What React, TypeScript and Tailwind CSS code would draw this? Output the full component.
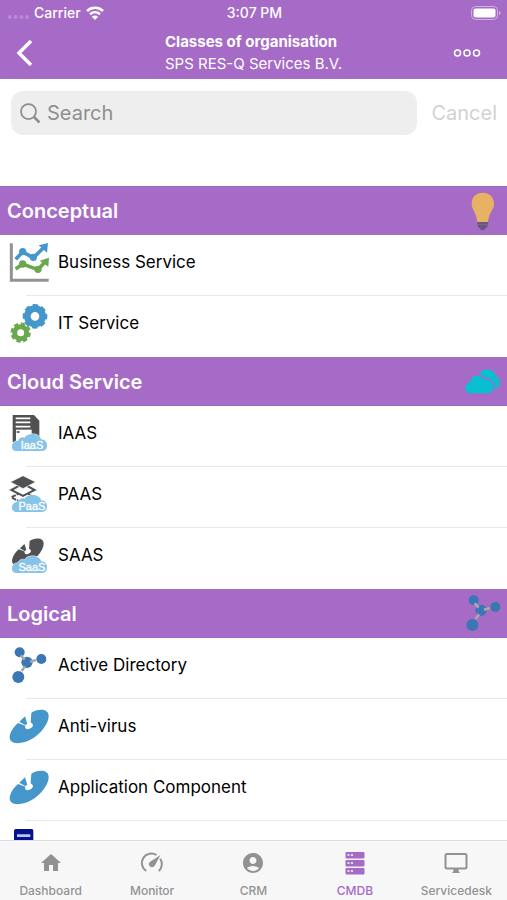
import type { ReactNode } from "react";
import { MdAccountCircle, MdHome } from "react-icons/md";

function Icon({ box, children }: { box: string; children: ReactNode }) {
  return (
    <svg
      viewBox={box}
      className="size-[39px] shrink-0 overflow-visible"
      aria-hidden="true"
    >
      {children}
    </svg>
  );
}

function ChartIcon() {
  return (
    <Icon box="30 171 117 117">
      <path d="M34 172V283H146" fill="none" stroke="#929292" strokeWidth="9" />
      <g fill="none" strokeWidth="11">
        <path d="M47 220L68 198L100 215L130 186" stroke="#4596ca" />
        <path d="M47 249L68 234L114 251L134 229" stroke="#6aa84f" />
      </g>
      <g fill="#4596ca">
        <circle cx="68" cy="197" r="11" />
        <circle cx="100" cy="214" r="11" />
        <path d="M116 178L144 171L141 200Z" />
      </g>
      <g fill="#6aa84f">
        <circle cx="68" cy="234" r="11" />
        <circle cx="114" cy="250" r="11" />
        <path d="M119 224L147 215L145 242Z" />
      </g>
    </Icon>
  );
}

function GearsIcon() {
  return (
    <Icon box="30 354 117 117">
      <g fill="none" stroke="#4596ca">
        <circle cx="105" cy="391" r="23" strokeWidth="20" />
        <circle
          cx="105"
          cy="391"
          r="33"
          strokeWidth="8"
          pathLength="16"
          strokeDasharray="1.250 0.750"
          strokeDashoffset="0.600"
        />
      </g>
      <g fill="none" stroke="#6aa84f">
        <circle cx="62" cy="440" r="18" strokeWidth="15" />
        <circle
          cx="62"
          cy="440"
          r="27"
          strokeWidth="7"
          pathLength="16"
          strokeDasharray="1.250 0.750"
        />
      </g>
    </Icon>
  );
}

// cloud badge shared by the *aaS icons, drawn on a 117 unit box
function CloudBadge({ label }: { label: string }) {
  return (
    <g>
      <path
        d="M21 111C10 111 6 105 6 98C6 87 13 80 24 81C27 72 36 68 44 71C48 64 56 60 68 60C82 60 92 68 93 76C105 76 111 85 111 95C111 105 104 111 95 111Z"
        fill="#86c3e8"
        stroke="#fff"
        strokeWidth="3"
        paintOrder="stroke"
      />
      <text
        x="66"
        y="105"
        textAnchor="middle"
        fontSize="33"
        fill="#fff"
        stroke="#fff"
        strokeWidth="1"
        className="font-['Liberation_Sans',sans-serif]"
      >
        {label}
      </text>
    </g>
  );
}

function IaasIcon() {
  return (
    <Icon box="0 0 117 117">
      <path d="M8 3H72L88 20V84H8Z" fill="#505153" />
      <path
        d="M17 13H61M17 25H61M17 38H61"
        stroke="#fff"
        strokeWidth="5"
        fill="none"
      />
      <path d="M18 47H65V84H18Z" fill="#fff" />
      <path d="M20 54H29" stroke="#505153" strokeWidth="5" />
      <CloudBadge label="IaaS" />
    </Icon>
  );
}

function PaasIcon() {
  return (
    <Icon box="0 0 117 117">
      <g fill="#fff" stroke="#505153" strokeWidth="6">
        <path d="M39 49L74 67L39 85L4 67Z" strokeDasharray="14 3" />
        <path d="M39 26L74 45L39 63L4 45Z" />
      </g>
      <path
        d="M39 2L77 21L39 41L1 21Z"
        fill="#505153"
        stroke="#fff"
        strokeWidth="2"
      />
      <CloudBadge label="PaaS" />
    </Icon>
  );
}

function DiscShape() {
  return (
    <>
      <path d="M64 17C80 6 116 2 116 27C116 54 82 95 42 106C14 113 -6 105 0 83C4 69 13 57 24 48L46 56C43 63 49 68 56 66C64 64 71 59 68 51L62 46Z" />
      <path d="M28 44L45 28L52 51L45 54Z" />
    </>
  );
}

function SaasIcon() {
  return (
    <Icon box="0 0 117 117">
      <g fill="#505153" transform="translate(7 1) scale(0.81)">
        <DiscShape />
      </g>
      <CloudBadge label="SaaS" />
    </Icon>
  );
}

function DiscIcon() {
  return (
    <Icon box="0 0 117 117">
      <g fill="#4596ca">
        <DiscShape />
      </g>
    </Icon>
  );
}

function NodesIcon() {
  return (
    <Icon box="30 168 117 117">
      <g fill="#3b77b5">
        <circle cx="59" cy="187" r="15" />
        <circle cx="81" cy="217" r="17" />
        <circle cx="124" cy="207" r="15" />
        <circle cx="55" cy="261" r="18" />
      </g>
      <path
        d="M62 196L74 209M90 215L108 210M75 229L65 243"
        stroke="#a9a9a9"
        strokeWidth="8"
        fill="none"
      />
    </Icon>
  );
}

function ServerIcon() {
  return (
    <Icon box="0 0 117 117">
      <rect x="12" width="58" height="112" rx="5" fill="#06128b" />
      <path d="M21 20H61M21 52H61" stroke="#b9c4ee" strokeWidth="8" />
    </Icon>
  );
}

function BulbIcon() {
  return (
    <Icon box="72 15 117 117">
      <path
        d="M128 20C108 20 95 33 95 53C95 72 110 80 112 108H144C146 80 162 72 162 53C162 33 148 20 128 20Z"
        fill="#e8b264"
      />
      <path d="M111 108H145L142 122L132 132H124L114 122Z" fill="#69577c" />
      <path d="M113 116H143" stroke="#8b6da3" strokeWidth="2" />
    </Icon>
  );
}

function CloudsIcon() {
  return (
    <Icon box="72 528 117 117">
      <path
        d="M118 566C122 554 134 549 146 551C159 552 166 560 166 568C176 573 181 584 179 594C177 604 170 610 160 611L130 590Z"
        fill="#08bfd2"
      />
      <path
        d="M92 622C81 622 76 615 76 606C76 596 82 590 91 589C92 576 101 568 113 569C122 570 129 574 133 581C148 579 160 589 160 604C160 615 153 622 143 622Z"
        fill="#08bfd2"
        stroke="#a66ac7"
        strokeWidth="9"
        paintOrder="stroke"
      />
    </Icon>
  );
}

function GaugeIcon() {
  return (
    <svg viewBox="0 0 24 24" className="size-6" fill="currentColor">
      <path
        d="M6.200 20A9.300 9.300 0 0 1 16.500 4M20.200 7.800A9.300 9.300 0 0 1 18.800 20"
        fill="none"
        stroke="currentColor"
        strokeWidth="2"
      />
      <path d="M20.500 4L15 14.200C14 16.200 11.500 16.700 10 15.500C8.300 14 8.400 11.800 10.200 10.700Z" />
    </svg>
  );
}

function RackIcon() {
  return (
    <svg viewBox="0 0 24 24" className="size-6" fill="currentColor">
      {[0, 8, 16].map((y) => (
        <g key={y}>
          <rect x="2.500" y={y + 1} width="19" height="6.500" rx="1" />
          <path d={`M4.500 ${y + 4}h2M8 ${y + 4}h2`} stroke="#e8d8f0" strokeWidth="2" />
        </g>
      ))}
    </svg>
  );
}

function MonitorIcon() {
  return (
    <svg viewBox="0 0 24 24" className="size-6" fill="none">
      <rect
        x="1.500"
        y="3"
        width="21"
        height="14.500"
        rx="1.500"
        stroke="currentColor"
        strokeWidth="2"
      />
      <path d="M9.500 18H14.500V20L16 22H8L9.500 20Z" fill="currentColor" />
    </svg>
  );
}

const sections = [
  {
    title: "Conceptual",
    icon: <BulbIcon />,
    items: [
      { name: "Business Service", icon: <ChartIcon /> },
      { name: "IT Service", icon: <GearsIcon /> },
    ],
  },
  {
    title: "Cloud Service",
    icon: <CloudsIcon />,
    items: [
      { name: "IAAS", icon: <IaasIcon /> },
      { name: "PAAS", icon: <PaasIcon /> },
      { name: "SAAS", icon: <SaasIcon /> },
    ],
  },
  {
    title: "Logical",
    icon: <NodesIcon />,
    items: [
      { name: "Active Directory", icon: <NodesIcon /> },
      { name: "Anti-virus", icon: <DiscIcon /> },
      { name: "Application Component", icon: <DiscIcon /> },
      { name: "", icon: <ServerIcon /> },
    ],
  },
];

const tabs = [
  { label: "Dashboard", icon: <MdHome className="size-6" /> },
  { label: "Monitor", icon: <GaugeIcon /> },
  { label: "CRM", icon: <MdAccountCircle className="size-6" /> },
  { label: "CMDB", icon: <RackIcon />, active: true },
  { label: "Servicedesk", icon: <MonitorIcon /> },
];

function StatusBar() {
  return (
    <div className="grid h-[26px] grid-cols-3 items-center pr-1.5 pl-2 text-sm font-medium">
      <div className="flex items-center gap-[5px]">
        <svg viewBox="0 0 22 4" className="mt-2 h-1 w-[21px]" fill="#bd8ad6">
          <circle cx="2" cy="2" r="2" />
          <circle cx="8" cy="2" r="2" />
          <circle cx="14" cy="2" r="2" />
          <circle cx="20" cy="2" r="2" />
        </svg>
        <span>Carrier</span>
        <svg viewBox="0 0 18 14" className="h-3.5 w-[18px]" fill="none">
          <path
            d="M1 5C5.500 0.800 12.500 0.800 17 5M4 8.200C7 5.500 11 5.500 14 8.200"
            stroke="currentColor"
            strokeWidth="2.500"
          />
          <path d="M9 14L5.800 10.700C7.500 9.200 10.500 9.200 12.200 10.700Z" fill="currentColor" />
        </svg>
      </div>
      <span className="text-center">3:07 PM</span>
      <svg viewBox="0 0 30 14" className="h-3.5 w-[30px] justify-self-end" fill="none">
        <rect x="0.500" y="0.500" width="26" height="13" rx="4" stroke="#cfaee0" />
        <rect x="2.500" y="2.500" width="22" height="9" rx="2" fill="#fff" />
        <path d="M28 5C30 5.500 30 8.500 28 9Z" fill="#cfaee0" />
      </svg>
    </div>
  );
}

export default function App() {
  return (
    <div className="flex h-screen flex-col overflow-hidden bg-white font-['Inter',sans-serif] text-black">
      <header className="shrink-0 bg-[#a66ac7] text-white">
        <StatusBar />
        <div className="flex h-[53px] items-center justify-between px-4">
          <button aria-label="Back" className="w-12">
            <svg viewBox="0 0 16 26" className="h-[26px] w-4" fill="none">
              <path d="M15 1L3 13L15 25" stroke="currentColor" strokeWidth="3.500" />
            </svg>
          </button>
          <div className="text-[15px] leading-[22px]">
            <h1 className="font-bold">Classes of organisation</h1>
            <p>SPS RES-Q Services B.V.</p>
          </div>
          <button aria-label="More options" className="flex w-12 justify-center">
            <svg viewBox="0 0 28 10" className="h-2.5 w-7" fill="none">
              <g stroke="currentColor" strokeWidth="1.500">
                <circle cx="4.500" cy="5" r="3" />
                <circle cx="14" cy="5" r="3" />
                <circle cx="23.500" cy="5" r="3" />
              </g>
            </svg>
          </button>
        </div>
      </header>

      <main className="min-h-0 flex-1 overflow-hidden">
        <form className="flex h-[107px] items-start gap-3.5 pt-3 pr-2.5 pl-[11px]">
          <label className="flex h-11 min-w-0 flex-1 items-center gap-1.5 rounded-xl bg-[#eee] px-2 text-[#8e8e8e]">
            <svg viewBox="0 0 22 22" className="size-[22px] shrink-0" fill="none">
              <circle cx="9.500" cy="9.500" r="7.500" stroke="currentColor" strokeWidth="1.750" />
              <path d="M15 15L20.500 20.500" stroke="currentColor" strokeWidth="2.500" />
            </svg>
            <input
              type="text"
              placeholder="Search"
              aria-label="Search"
              className="min-w-0 flex-1 bg-transparent text-xl outline-none placeholder:text-[#8e8e8e]"
            />
          </label>
          <button type="button" className="h-11 text-xl text-[#d2d2d2]">
            Cancel
          </button>
        </form>

        {sections.map((section) => (
          <section key={section.title}>
            <div className="flex h-[49px] items-center justify-between bg-[#a66ac7] pr-1 pl-[7px] text-white">
              <h2 className="text-xl font-semibold">{section.title}</h2>
              {section.icon}
            </div>
            <ul>
              {section.items.map((item, i) => (
                <li key={i} className="h-[61px]">
                  <button className="flex h-[60px] w-full items-center gap-[9px] px-2.5 pb-[5px] text-left text-[17px]">
                    {item.icon}
                    <span>{item.name}</span>
                  </button>
                  {i < section.items.length - 1 && (
                    <div className="ml-[26px] h-px bg-[#e9e9e9]" />
                  )}
                </li>
              ))}
            </ul>
          </section>
        ))}
      </main>

      <nav className="grid h-[60px] shrink-0 grid-cols-5 border-t border-[#dcdcdc] bg-[#f7f7f7] text-xs font-medium">
        {tabs.map((tab) => (
          <a
            key={tab.label}
            href="#"
            className={
              tab.active
                ? "flex flex-col items-center gap-2 pt-2.5 text-[#a66ac7]"
                : "flex flex-col items-center gap-2 pt-2.5 text-[#929292]"
            }
          >
            {tab.icon}
            <span>{tab.label}</span>
          </a>
        ))}
      </nav>
    </div>
  );
}
